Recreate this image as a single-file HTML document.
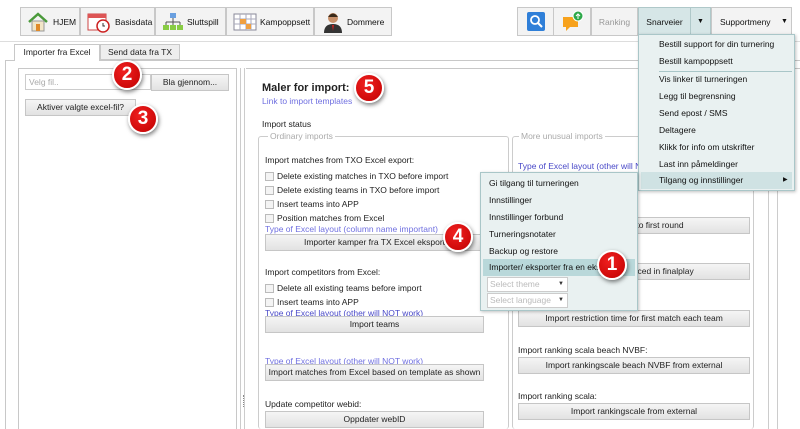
<!DOCTYPE html>
<html><head><meta charset="utf-8"><style>
*{box-sizing:border-box;margin:0;padding:0}
body{width:800px;height:429px;overflow:hidden;background:#fff;font-family:"Liberation Sans",sans-serif;font-size:8.5px;color:#222;position:relative}
.a{position:absolute}
.tb{position:absolute;top:7px;height:29px;border:1px solid #c8c8c8;background:#f3f3f3;display:flex;align-items:center;font-size:8.5px;color:#111}
.tb span{white-space:nowrap}
.btn{position:absolute;height:17px;border:1px solid #c6c6c6;background:linear-gradient(#f5f5f5,#e2e2e2);text-align:center;line-height:15px;font-size:8.5px;color:#222;white-space:nowrap;overflow:hidden}
.lnk{position:absolute;color:#6f6fe0;font-size:8.5px;white-space:nowrap}
.t{position:absolute;white-space:nowrap;font-size:8.5px}
.cb{position:absolute;width:9px;height:9px;border:1px solid #bbb;background:#f4f4f4}
.menu{position:absolute;background:#e9f1f1;border:1px solid #a9c6c8;box-shadow:1px 1px 3px rgba(0,0,0,.25)}
.mi{position:absolute;left:0;right:0;height:17px;line-height:17px;padding-left:20px;font-size:8.5px;color:#111;white-space:nowrap;overflow:hidden}
.num{position:absolute;width:30px;height:30px;border-radius:50%;background:radial-gradient(circle at 40% 35%,#f02020,#c00000);border:2px solid #fff;box-shadow:1px 2px 4px rgba(0,0,0,.5);color:#fff;font:bold 19px "Liberation Sans",sans-serif;text-align:center;line-height:26px}
</style></head><body>
<div class="tb" style="left:20px;width:60px"><svg class="a" style="left:6px;top:3px" width="22" height="22"><path d="M2 11 L11 3 L20 11" stroke="#4a9a3a" stroke-width="2.5" fill="none"/><rect x="5" y="10" width="12" height="10" fill="#f2e6c8" stroke="#999"/><rect x="9" y="13" width="4" height="7" fill="#e08a2a"/></svg><span class="a" style="left:32px">HJEM</span></div>
<div class="tb" style="left:80px;width:75px"><svg class="a" style="left:6px;top:3px" width="24" height="22"><rect x="1" y="3" width="18" height="16" fill="#fff" stroke="#c44"/><rect x="1" y="3" width="18" height="4" fill="#d55"/><circle cx="16" cy="15" r="6" fill="#fff" stroke="#c22" stroke-width="1.5"/><path d="M16 12v3h2" stroke="#333" fill="none"/></svg><span class="a" style="left:34px">Basisdata</span></div>
<div class="tb" style="left:155px;width:71px"><svg class="a" style="left:6px;top:3px" width="22" height="22"><rect x="8" y="2" width="6" height="5" fill="#6aa0e0"/><path d="M11 7v4M4 11h14M4 11v3M11 11v3M18 11v3" stroke="#555"/><rect x="1" y="14" width="6" height="5" fill="#8c4"/><rect x="8" y="14" width="6" height="5" fill="#8c4"/><rect x="15" y="14" width="6" height="5" fill="#8c4"/></svg><span class="a" style="left:31px">Sluttspill</span></div>
<div class="tb" style="left:226px;width:88px"><svg class="a" style="left:6px;top:5px" width="24" height="18"><rect x="1" y="1" width="22" height="16" fill="#fff" stroke="#889"/><path d="M1 6h22M1 11h22M7 1v16M13 1v16M18 1v16" stroke="#aab"/><rect x="7" y="6" width="6" height="5" fill="#f0a040"/><rect x="13" y="11" width="5" height="5" fill="#f0a040"/></svg><span class="a" style="left:33px">Kampoppsett</span></div>
<div class="tb" style="left:314px;width:78px"><svg class="a" style="left:8px;top:3px" width="20" height="22"><circle cx="10" cy="7" r="5" fill="#c8906a"/><path d="M5 6q5-7 10 0" fill="#3a2a1a"/><path d="M1 22q0-9 9-9t9 9z" fill="#333"/><path d="M9 14l1 6 1-6z" fill="#c22"/></svg><span class="a" style="left:32px">Dommere</span></div>
<div class="tb" style="left:517px;width:37px"><svg class="a" style="left:8px;top:3px" width="20" height="21"><rect x="1" y="1" width="18" height="19" rx="2" fill="#2f7fd8"/><circle cx="9" cy="9" r="4" fill="none" stroke="#fff" stroke-width="1.8"/><path d="M12 12l4 4" stroke="#fff" stroke-width="2"/></svg></div>
<div class="tb" style="left:553px;width:38px"><svg class="a" style="left:7px;top:2px" width="24" height="22"><path d="M2 7h15v10h-8l-4 4v-4h-3z" fill="#f7a21c"/><circle cx="17" cy="6" r="5" fill="#2ea84a" stroke="#fff"/><path d="M17 9V4M15 6l2-2 2 2" stroke="#fff" fill="none"/></svg></div>
<div class="tb" style="left:591px;width:47px;justify-content:center;color:#999">Ranking</div>
<div class="tb" style="left:638px;width:53px;justify-content:center;background:#d6e6e7;border-color:#afc8c9">Snarveier</div>
<div class="tb" style="left:690px;width:21px;justify-content:center;background:#d6e6e7;border-color:#afc8c9;font-size:7px">▼</div>
<div class="tb" style="left:711px;width:81px;padding-left:8px">Supportmeny<span class="a" style="left:69px;font-size:7px">▼</span></div>
<div class="a" style="left:0;top:41px;width:800px;height:1px;background:#ddd"></div>
<div class="a" style="left:5px;top:60px;width:795px;height:369px;border-top:1px solid #c8c8c8;border-left:1px solid #c8c8c8"></div>
<div class="a" style="left:14px;top:44px;width:86px;height:17px;border:1px solid #c8c8c8;border-bottom:none;background:#fff;line-height:15px;text-align:center">Importer fra Excel</div>
<div class="a" style="left:100px;top:44px;width:80px;height:16px;border:1px solid #c8c8c8;background:#eee;line-height:14px;text-align:center">Send data fra TX</div>
<div class="a" style="left:18px;top:68px;width:219px;height:361px;border:1px solid #c8c8c8;border-bottom:none"></div>
<div class="a" style="left:25px;top:74px;width:126px;height:16px;border:1px solid #ccc;color:#aaa;padding-left:3px;line-height:14px">Velg fil..</div>
<div class="btn" style="left:151px;top:74px;width:78px">Bla gjennom...</div>
<div class="btn" style="left:25px;top:99px;width:111px">Aktiver valgte excel-fil?</div>
<div class="a" style="left:240px;top:68px;width:5px;height:361px;border-left:1px solid #ccc;border-right:1px solid #ccc"></div>
<div class="a" style="left:243px;top:395px;width:1px;height:12px;border-left:1px dotted #888"></div>
<div class="a" style="left:246px;top:68px;width:554px;height:361px;border-top:1px solid #c8c8c8"></div>
<div class="t" style="left:262px;top:82px;font-weight:bold;font-size:11px">Maler for import:</div>
<div class="lnk" style="left:262px;top:96px">Link to import templates</div>
<div class="t" style="left:262px;top:119px">Import status</div>
<div class="a" style="left:258px;top:136px;width:251px;height:293px;border:1px solid #ccc;border-bottom:none;border-radius:3px"></div>
<div class="t" style="left:268px;top:131px;background:#fff;padding:0 2px;color:#aaa">Ordinary imports</div>
<div class="a" style="left:512px;top:136px;width:242px;height:293px;border:1px solid #ccc;border-bottom:none;border-radius:3px"></div>
<div class="t" style="left:519px;top:131px;background:#fff;padding:0 2px;color:#aaa">More unusual imports</div>
<div class="a" style="left:768px;top:190px;width:1px;height:239px;background:#ccc"></div>
<div class="a" style="left:777px;top:190px;width:1px;height:239px;background:#ccc"></div>
<div class="t" style="left:265px;top:155px">Import matches from TXO Excel export:</div>
<div class="cb" style="left:265px;top:172px"></div><div class="t" style="left:277px;top:171px">Delete existing matches in TXO before import</div>
<div class="cb" style="left:265px;top:186px"></div><div class="t" style="left:277px;top:185px">Delete existing teams in TXO before import</div>
<div class="cb" style="left:265px;top:200px"></div><div class="t" style="left:277px;top:199px">Insert teams into APP</div>
<div class="cb" style="left:265px;top:214px"></div><div class="t" style="left:277px;top:213px">Position matches from Excel</div>
<div class="lnk" style="left:265px;top:224px">Type of Excel layout (column name important)</div>
<div class="btn" style="left:265px;top:234px;width:219px">Importer kamper fra TX Excel eksport</div>
<div class="t" style="left:265px;top:267px">Import competitors from Excel:</div>
<div class="cb" style="left:265px;top:284px"></div><div class="t" style="left:277px;top:283px">Delete all existing teams before import</div>
<div class="cb" style="left:265px;top:298px"></div><div class="t" style="left:277px;top:297px">Insert teams into APP</div>
<div class="lnk" style="left:265px;top:308px;color:#4848c8">Type of Excel layout (other will NOT work)</div>
<div class="btn" style="left:265px;top:316px;width:219px">Import teams</div>
<div class="lnk" style="left:265px;top:356px">Type of Excel layout (other will NOT work)</div>
<div class="btn" style="left:265px;top:364px;width:219px">Import matches from Excel based on template as shown</div>
<div class="t" style="left:265px;top:399px">Update competitor webid:</div>
<div class="btn" style="left:265px;top:411px;width:219px">Oppdater webID</div>
<div class="lnk" style="left:518px;top:161px;color:#4848c8">Type of Excel layout (other will NOT work)</div>
<div class="t" style="left:518px;top:205px">Import teams to first round:</div>
<div class="btn" style="left:518px;top:217px;width:232px">Import teams to first round</div>
<div class="btn" style="left:518px;top:263px;width:232px">Import teams placed in finalplay</div>
<div class="btn" style="left:518px;top:310px;width:232px">Import restriction time for first match each team</div>
<div class="t" style="left:518px;top:345px">Import ranking scala beach NVBF:</div>
<div class="btn" style="left:518px;top:357px;width:232px">Import rankingscale beach NVBF from external</div>
<div class="t" style="left:518px;top:391px">Import ranking scala:</div>
<div class="btn" style="left:518px;top:403px;width:232px">Import rankingscale from external</div>
<div class="menu" style="left:638px;top:34px;width:157px;height:157px">
<div class="mi" style="top:1px">Bestill support for din turnering</div>
<div class="mi" style="top:18px">Bestill kampoppsett</div>
<div class="a" style="left:20px;right:2px;top:36px;height:1px;background:#a9c6c8"></div>
<div class="mi" style="top:36px">Vis linker til turneringen</div>
<div class="mi" style="top:53px">Legg til begrensning</div>
<div class="mi" style="top:70px">Send epost / SMS</div>
<div class="mi" style="top:87px">Deltagere</div>
<div class="mi" style="top:104px">Klikk for info om utskrifter</div>
<div class="mi" style="top:121px">Last inn påmeldinger</div>
<div class="mi" style="top:137px;background:#cfe2e3;left:2px;right:2px;padding-left:18px">Tilgang og innstillinger<span class="a" style="left:142px;font-size:6px">▶</span></div>
</div>
<div class="menu" style="left:480px;top:172px;width:158px;height:139px">
<div class="mi" style="top:2px;padding-left:8px">Gi tilgang til turneringen</div>
<div class="mi" style="top:19px;padding-left:8px">Innstillinger</div>
<div class="mi" style="top:36px;padding-left:8px">Innstillinger forbund</div>
<div class="mi" style="top:53px;padding-left:8px">Turneringsnotater</div>
<div class="mi" style="top:70px;padding-left:8px">Backup og restore</div>
<div class="mi" style="top:86px;padding-left:6px;left:2px;right:2px;background:#b9d8da">Importer/ eksporter fra en ekstern fil</div>
<div class="a" style="left:6px;top:104px;width:81px;height:15px;border:1px solid #ccc;background:#fff;color:#bbb;padding-left:2px;line-height:13px">Select theme<span class="a" style="left:70px;color:#333;font-size:6px">▼</span></div>
<div class="a" style="left:6px;top:120px;width:81px;height:15px;border:1px solid #ccc;background:#fff;color:#bbb;padding-left:2px;line-height:13px">Select language<span class="a" style="left:70px;color:#333;font-size:6px">▼</span></div>
</div>
<div class="num" style="left:112px;top:60px">2</div>
<div class="num" style="left:128px;top:104px">3</div>
<div class="num" style="left:354px;top:73px">5</div>
<div class="num" style="left:443px;top:222px">4</div>
<div class="num" style="left:597px;top:250px">1</div>
</body></html>
